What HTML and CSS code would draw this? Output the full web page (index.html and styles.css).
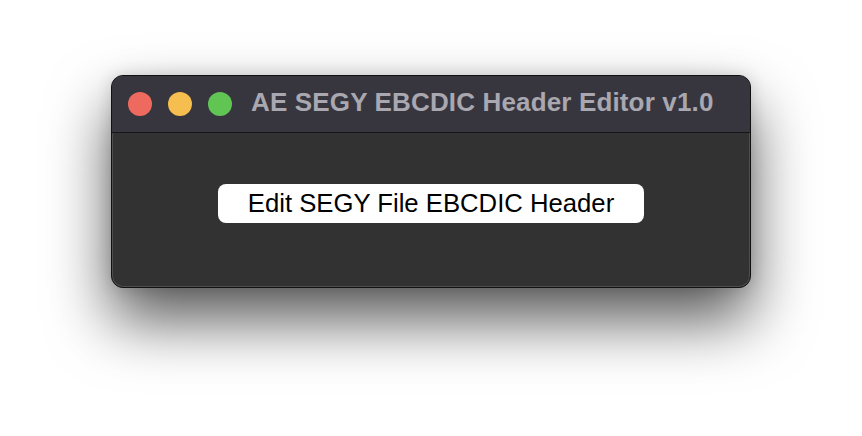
FILE: index.html
```html
<!DOCTYPE html>
<html>
<head>
<meta charset="utf-8">
<link rel="stylesheet" href="styles.css">
</head>
<body>
<div class="window">
  <div class="titlebar">
    <div class="lights">
      <span class="light red"></span>
      <span class="light yellow"></span>
      <span class="light green"></span>
    </div>
    <div class="title">AE SEGY EBCDIC Header Editor v1.0</div>
  </div>
  <div class="content">
    <button class="btn">Edit SEGY File EBCDIC Header</button>
  </div>
</div>
</body>
</html>
```
FILE: styles.css
```css
html, body {
  margin: 0;
  padding: 0;
  background: #ffffff;
}
body {
  min-height: 436px;
  box-sizing: border-box;
  padding: 75px 0 0 111px;
  font-family: "Liberation Sans", Arial, sans-serif;
}
.window {
  width: 640px;
  height: 213px;
  box-sizing: border-box;
  border: 1px solid #111;
  border-radius: 12px;
  overflow: hidden;
  background: #323232;
  box-shadow: inset 0 0 0 1px rgba(255,255,255,0.14), 0 32px 62px rgba(0,0,0,0.66), 0 0 16px rgba(0,0,0,0.14);
  display: flex;
  flex-direction: column;
}
.titlebar {
  height: 57px;
  flex: none;
  background: #37363f;
  border-bottom: 1px solid #16161a;
  display: flex;
  align-items: center;
  box-sizing: border-box;
  padding-left: 16px;
}
.lights {
  display: flex;
  gap: 16px;
}
.light {
  width: 24px;
  height: 24px;
  border-radius: 50%;
  display: block;
}
.red { background: #ee6a5f; }
.yellow { background: #f5be4f; }
.green { background: #61c554; }
.title {
  margin-left: 19px;
  color: #a9a7b0;
  font-weight: bold;
  font-size: 26px;
  letter-spacing: 0.15px;
  line-height: 30px;
  margin-top: -4px;
}
.content {
  flex: 1;
  display: flex;
  justify-content: center;
  align-items: flex-start;
  padding-top: 51px;
}
.btn {
  width: 426px;
  height: 39px;
  border: none;
  border-radius: 8px;
  background: #ffffff;
  color: #000;
  font-family: "Liberation Sans", Arial, sans-serif;
  font-size: 25.7px;
  line-height: 39px;
  padding: 0;
}
```
